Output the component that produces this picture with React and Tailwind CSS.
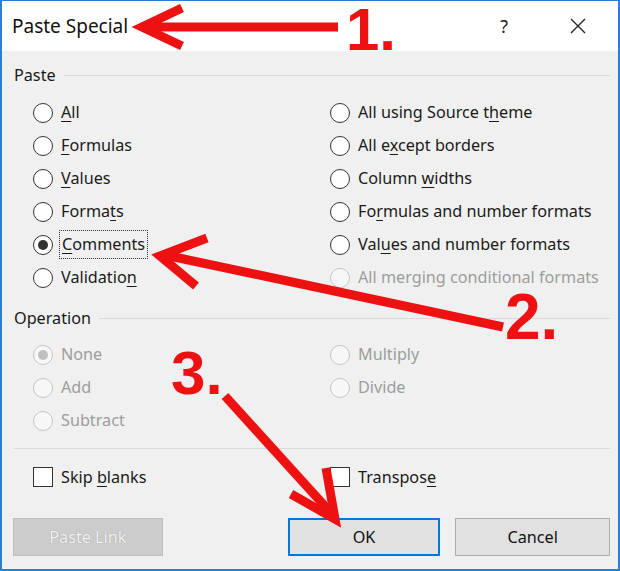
import React from "react";

const PASTE_LEFT = [
  { pre: "", key: "A", post: "ll" },
  { pre: "", key: "F", post: "ormulas" },
  { pre: "", key: "V", post: "alues" },
  { pre: "Forma", key: "t", post: "s" },
  { pre: "", key: "C", post: "omments", checked: true, focused: true },
  { pre: "Validatio", key: "n", post: "" },
];

const PASTE_RIGHT = [
  { pre: "All using Source t", key: "h", post: "eme" },
  { pre: "All e", key: "x", post: "cept borders" },
  { pre: "Column ", key: "w", post: "idths" },
  { pre: "Fo", key: "r", post: "mulas and number formats" },
  { pre: "Val", key: "u", post: "es and number formats" },
  { pre: "All merging conditional formats", key: "", post: "", disabled: true },
];

const OPERATION_LEFT = [
  { pre: "None", checked: true },
  { pre: "Add" },
  { pre: "Subtract" },
];

const OPERATION_RIGHT = [{ pre: "Multiply" }, { pre: "Divide" }];

const Radio = ({ checked, disabled }) => (
  <span
    className={`w-[20px] h-[20px] rounded-full border flex items-center justify-center shrink-0 ${
      disabled ? "border-[#c4c4c4] bg-[#f7f7f7]" : "border-[#333] bg-white"
    }`}
  >
    {checked && (
      <span
        className={`w-[10px] h-[10px] rounded-full ${
          disabled ? "bg-[#c0c0c0]" : "bg-[#333]"
        }`}
      />
    )}
  </span>
);

const Label = ({ pre, keyChar, post }) => (
  <>
    {pre}
    {keyChar && <span className="underline underline-offset-[3px]">{keyChar}</span>}
    {post}
  </>
);

const RadioRow = ({ item, disabled }) => {
  const off = disabled || item.disabled;
  return (
    <div className="h-[33px] flex items-center gap-[8px]">
      <Radio checked={item.checked} disabled={off} />
      <span
        className={`${off ? "text-[#9d9d9d]" : "text-[#1a1a1a]"} ${
          item.focused ? "outline-1 outline-dotted outline-[#333] outline-offset-[1px] px-px" : ""
        }`}
      >
        <Label pre={item.pre} keyChar={item.key} post={item.post} />
      </span>
    </div>
  );
};

const GroupTitle = ({ children }) => (
  <div className="h-[24px] flex items-center gap-[8px]">
    <span>{children}</span>
    <span className="flex-1 h-px bg-[#dadada]" />
  </div>
);

const Checkbox = ({ pre, keyChar, post }) => (
  <div className="h-[24px] flex items-center gap-[8px]">
    <span className="w-[20px] h-[20px] border border-[#333] bg-white shrink-0" />
    <span>
      <Label pre={pre} keyChar={keyChar} post={post} />
    </span>
  </div>
);

export default function App() {
  return (
    <div className="relative w-[620px] h-[571px] overflow-hidden bg-white font-['Noto_Sans',sans-serif] text-[16.2px] text-[#1a1a1a]">
      <div className="w-full h-full flex flex-col border-x-2 border-b-2 border-t border-[#2a7fd4] bg-[#f0f0f0]">
        {/* title bar */}
        <div className="h-[50px] shrink-0 bg-white flex items-center pl-[10px] pr-[32px]">
          <span className="text-[19px] text-[#111]">Paste Special</span>
          <span className="ml-auto text-[18px] text-[#222] mr-[62px]">?</span>
          <svg width="16" height="16" viewBox="0 0 16 16" className="text-[#222]">
            <path d="M1 1L15 15M15 1L1 15" stroke="currentColor" strokeWidth="1.4" />
          </svg>
        </div>

        <div className="flex-1 flex flex-col pl-[12px] pr-[8px]">
          <div className="mt-[12px]">
            <GroupTitle>Paste</GroupTitle>
          </div>
          <div className="mt-[9px] ml-[19px] grid grid-cols-[297px_1fr]">
            <div className="flex flex-col">
              {PASTE_LEFT.map((item) => (
                <RadioRow key={item.pre + item.post} item={item} />
              ))}
            </div>
            <div className="flex flex-col">
              {PASTE_RIGHT.map((item) => (
                <RadioRow key={item.pre + item.post} item={item} />
              ))}
            </div>
          </div>

          <div className="mt-[12px]">
            <GroupTitle>Operation</GroupTitle>
          </div>
          <div className="mt-[8px] ml-[19px] grid grid-cols-[297px_1fr]">
            <div className="flex flex-col">
              {OPERATION_LEFT.map((item) => (
                <RadioRow key={item.pre} item={item} disabled />
              ))}
            </div>
            <div className="flex flex-col">
              {OPERATION_RIGHT.map((item) => (
                <RadioRow key={item.pre} item={item} disabled />
              ))}
            </div>
          </div>

          <div className="mt-[11px] h-px bg-[#dadada]" />

          <div className="mt-[16px] ml-[19px] grid grid-cols-[297px_1fr]">
            <Checkbox pre="Skip " keyChar="b" post="lanks" />
            <Checkbox pre="Transpos" keyChar="e" post="" />
          </div>

          <div className="mt-[29px] flex items-center">
            <button className="ml-[-1px] w-[150px] h-[38px] bg-[#cccccc] border border-[#bfbfbf] text-[#f4f4f4] [text-shadow:0_0_1px_#8a8a8a]">
              Paste Link
            </button>
            <button className="ml-[125px] w-[153px] h-[38px] bg-[#e1e1e1] border-2 border-[#0078d7] text-[#111]">
              OK
            </button>
            <button className="ml-[15px] w-[155px] h-[38px] bg-[#e1e1e1] border border-[#adadad] text-[#111]">
              Cancel
            </button>
          </div>
        </div>
      </div>

      {/* red callout arrows */}
      <svg
        className="absolute top-0 left-0 pointer-events-none"
        width="620"
        height="571"
        viewBox="0 0 620 571"
      >
        <g stroke="#ee1111" strokeWidth="9" fill="none" strokeLinejoin="miter">
          <path d="M146 27H338" />
          <path d="M182 8L142 27L182 46" />
          <path d="M503 327L165 255" />
          <path d="M207 238L160 256L196 286" />
          <path d="M225 396L332 514" />
          <path d="M291 494L335 519L326 468" />
        </g>
      </svg>
      <span className="absolute left-[346px] top-[0px] text-[60px] font-bold text-[#ee1111] font-['Liberation_Sans',sans-serif] leading-none">
        1.
      </span>
      <span className="absolute left-[505px] top-[285px] text-[64px] font-bold text-[#ee1111] font-['Liberation_Sans',sans-serif] leading-none">
        2.
      </span>
      <span className="absolute left-[171px] top-[342px] text-[62px] font-bold text-[#ee1111] font-['Liberation_Sans',sans-serif] leading-none">
        3.
      </span>
    </div>
  );
}
